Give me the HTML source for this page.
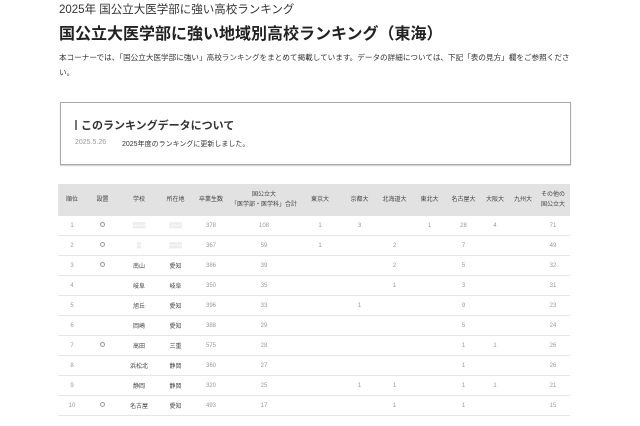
<!DOCTYPE html>
<html><head><meta charset="utf-8"><style>
body{margin:0;width:640px;height:426px;background:#fff;font-family:"Liberation Sans","Noto Sans CJK JP",sans-serif;color:#333;position:relative;overflow:hidden}
.a{position:absolute;white-space:nowrap}
table{position:absolute;left:58px;top:184px;border-collapse:collapse;table-layout:fixed;width:512px;font-size:6px}
th{background:#e2e2e2;height:32px;font-weight:normal;color:#444;line-height:10px;padding:0;white-space:nowrap}
td{height:19px;border-bottom:1px solid #e6e6e6;text-align:center;color:#999;padding:0}
td.s{color:#444}
.c{display:inline-block;width:5px;height:5px;border:1.3px solid #999;border-radius:50%;box-sizing:border-box}
</style></head><body>
<div class="a" style="left:59px;top:1px;font-size:11.5px;color:#333">2025年 国公立大医学部に強い高校ランキング</div>
<div class="a" style="left:59px;top:20px;font-size:16px;color:#222;font-weight:bold">国公立大医学部に強い地域別高校ランキング（東海）</div>
<div class="a" style="left:59px;top:52px;font-size:7.6px;color:#333">本コーナーでは、「国公立大医学部に強い」高校ランキングをまとめて掲載しています。データの詳細については、下記「表の見方」欄をご参照くださ</div>
<div class="a" style="left:59px;top:67px;font-size:7.6px;color:#333">い。</div>
<div class="a" style="left:60px;top:102px;width:509px;height:61px;border:1px solid #aaa;box-shadow:0 1px 1px #ccc"></div>
<div class="a" style="left:75px;top:120px;width:2px;height:10px;background:#777"></div>
<div class="a" style="left:81px;top:117px;font-size:11px;font-weight:bold;color:#333">このランキングデータについて</div>
<div class="a" style="left:75px;top:139px;font-size:7px;color:#999">2025.5.26</div>
<div class="a" style="left:122px;top:139px;font-size:7px;color:#333">2025年度のランキングに更新しました。</div>
<table>
<colgroup><col style="width:28px"><col style="width:33px"><col style="width:40px"><col style="width:33px"><col style="width:38px"><col style="width:68px"><col style="width:44px"><col style="width:35px"><col style="width:35px"><col style="width:35px"><col style="width:33px"><col style="width:30px"><col style="width:26px"><col style="width:34px"></colgroup>
<tr><th>順位</th><th>設置</th><th>学校</th><th>所在地</th><th>卒業生数</th><th>国公立大<br>「医学部・医学科」合計</th><th>東京大</th><th>京都大</th><th>北海道大</th><th>東北大</th><th>名古屋大</th><th>大阪大</th><th>九州大</th><th>その他の<br>国公立大</th></tr>
<tr><td>1</td><td><span class="c"></span></td><td class="s" style="color:#ccc">▒▒▒</td><td class="s" style="color:#ccc">▒▒▒</td><td>378</td><td>108</td><td>1</td><td>3</td><td></td><td>1</td><td>28</td><td>4</td><td></td><td>71</td></tr>
<tr><td>2</td><td><span class="c"></span></td><td class="s" style="color:#ccc">▒</td><td class="s" style="color:#ccc">▒▒▒</td><td>367</td><td>59</td><td>1</td><td></td><td>2</td><td></td><td>7</td><td></td><td></td><td>49</td></tr>
<tr><td>3</td><td><span class="c"></span></td><td class="s">南山</td><td class="s">愛知</td><td>386</td><td>39</td><td></td><td></td><td>2</td><td></td><td>5</td><td></td><td></td><td>32</td></tr>
<tr><td>4</td><td></td><td class="s">岐阜</td><td class="s">岐阜</td><td>350</td><td>35</td><td></td><td></td><td>1</td><td></td><td>3</td><td></td><td></td><td>31</td></tr>
<tr><td>5</td><td></td><td class="s">旭丘</td><td class="s">愛知</td><td>396</td><td>33</td><td></td><td>1</td><td></td><td></td><td>9</td><td></td><td></td><td>23</td></tr>
<tr><td>6</td><td></td><td class="s">岡崎</td><td class="s">愛知</td><td>388</td><td>29</td><td></td><td></td><td></td><td></td><td>5</td><td></td><td></td><td>24</td></tr>
<tr><td>7</td><td><span class="c"></span></td><td class="s">高田</td><td class="s">三重</td><td>575</td><td>28</td><td></td><td></td><td></td><td></td><td>1</td><td>1</td><td></td><td>26</td></tr>
<tr><td>8</td><td></td><td class="s">浜松北</td><td class="s">静岡</td><td>360</td><td>27</td><td></td><td></td><td></td><td></td><td>1</td><td></td><td></td><td>26</td></tr>
<tr><td>9</td><td></td><td class="s">静岡</td><td class="s">静岡</td><td>320</td><td>25</td><td></td><td>1</td><td>1</td><td></td><td>1</td><td>1</td><td></td><td>21</td></tr>
<tr><td>10</td><td><span class="c"></span></td><td class="s">名古屋</td><td class="s">愛知</td><td>493</td><td>17</td><td></td><td></td><td>1</td><td></td><td>1</td><td></td><td></td><td>15</td></tr>
</table>
</body></html>
